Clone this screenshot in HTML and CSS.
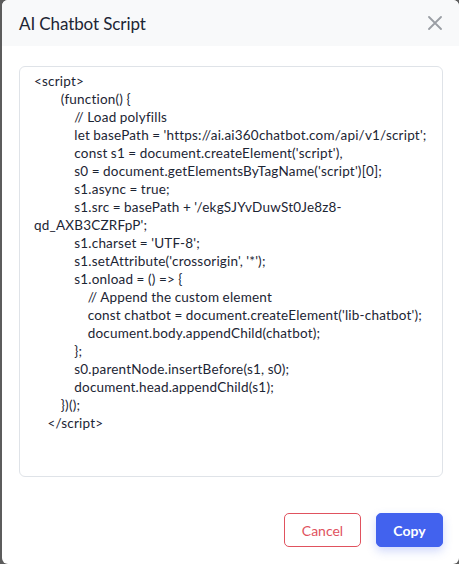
FILE: index.html
```html
<!DOCTYPE html>
<html>
<head>
<meta charset="utf-8">
<link rel="stylesheet" href="styles.css">
</head>
<body>
<div class="modal">
  <div class="modal-header">
    <h2 class="modal-title">AI Chatbot Script</h2>
    <button class="close" aria-label="Close">
      <svg width="14" height="14" viewBox="0 0 14 14"><path d="M1 1L13 13M13 1L1 13" stroke="#9a9ea4" stroke-width="1.8" stroke-linecap="round"/></svg>
    </button>
  </div>
  <div class="modal-body">
<pre class="code">&lt;script&gt;
        (function() {
            // Load polyfills
            let basePath = 'https://ai.ai360chatbot.com/api/v1/script';
            const s1 = document.createElement('script'),
            s0 = document.getElementsByTagName('script')[0];
            s1.async = true;
            s1.src = basePath + '/ekgSJYvDuwSt0Je8z8-
qd_AXB3CZRFpP';
            s1.charset = 'UTF-8';
            s1.setAttribute('crossorigin', '*');
            s1.onload = () =&gt; {
                // Append the custom element
                const chatbot = document.createElement('lib-chatbot');
                document.body.appendChild(chatbot);
            };
            s0.parentNode.insertBefore(s1, s0);
            document.head.appendChild(s1);
        })();
    &lt;/script&gt;</pre>
  </div>
  <div class="modal-footer">
    <button class="btn btn-cancel">Cancel</button>
    <button class="btn btn-copy">Copy</button>
  </div>
</div>
</body>
</html>
```
FILE: styles.css
```css
html, body {
  margin: 0;
  padding: 0;
  height: 100%;
}
body {
  background: #5c5c5c;
  padding-left: 2px;
  box-sizing: border-box;
  font-family: "Lato", "Noto Sans", sans-serif;
}
.modal {
  background: #fff;
  height: 564px;
  border-radius: 6px;
  overflow: hidden;
  display: flex;
  flex-direction: column;
}
.modal-header {
  height: 46px;
  background: #f8f9fa;
  display: flex;
  align-items: center;
  justify-content: space-between;
  padding: 0 17px 0 17px;
  flex-shrink: 0;
}
.modal-title {
  margin: 0;
  font-size: 17px;
  font-weight: 400;
  letter-spacing: -0.1px;
  color: #1c2534;
}
.close {
  border: 0;
  background: none;
  padding: 0;
  margin-right: 0;
  width: 14px;
  height: 14px;
  display: flex;
}
.modal-body {
  padding: 20px 16px 0 17px;
}
.code {
  margin: 0;
  height: 411px;
  box-sizing: border-box;
  border: 1px solid #dfe3e8;
  border-radius: 6px;
  padding: 5px 14px;
  font-family: "Lato", "Noto Sans", sans-serif;
  font-size: 13.5px;
  letter-spacing: 0.2px;
  word-spacing: -0.3px;
  line-height: 18px;
  color: #1c2534;
  white-space: pre-wrap;
}
.modal-footer {
  display: flex;
  justify-content: flex-end;
  gap: 15px;
  padding: 36px 16px 0 0;
}
.btn {
  height: 34px;
  border-radius: 5px;
  font-family: "Lato", "Noto Sans", sans-serif;
  font-size: 14px;
  padding: 0;
  cursor: pointer;
}
.btn-cancel {
  width: 77px;
  background: #fff;
  border: 1px solid #e0525e;
  color: #e0525e;
}
.btn-copy {
  width: 67px;
  background: #4262ee;
  border: 1px solid #4262ee;
  color: #fff;
  font-weight: 700;
  box-shadow: 0 4px 10px rgba(66, 98, 238, 0.25);
}
```
